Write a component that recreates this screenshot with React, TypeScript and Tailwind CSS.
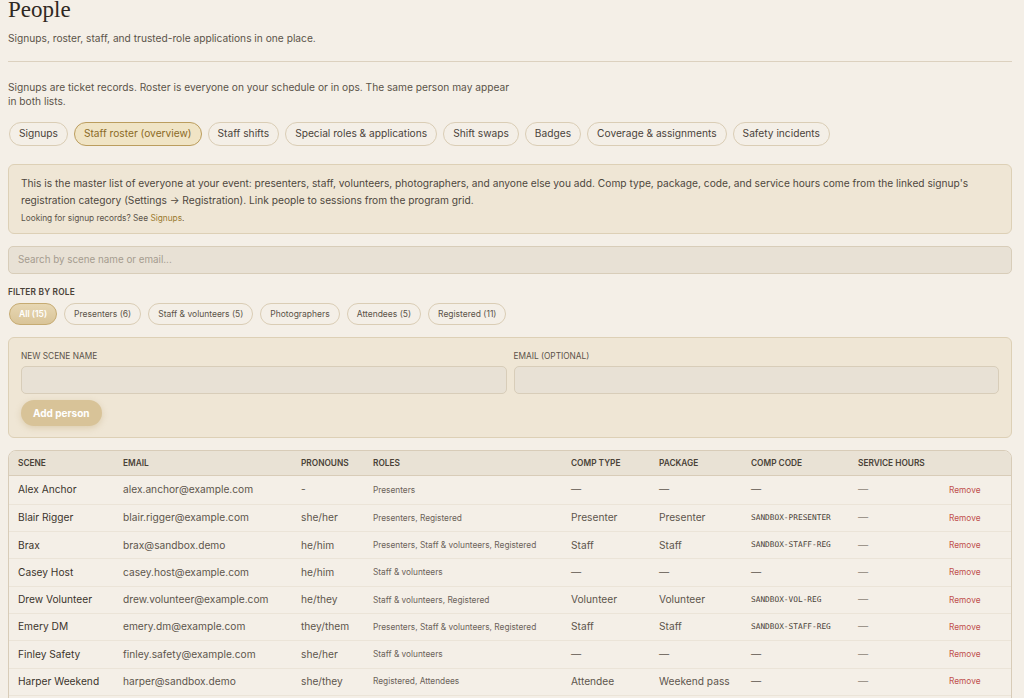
const tabs = [
  "Signups",
  "Staff roster (overview)",
  "Staff shifts",
  "Special roles & applications",
  "Shift swaps",
  "Badges",
  "Coverage & assignments",
  "Safety incidents",
];

const roleFilters = [
  "All (15)",
  "Presenters (6)",
  "Staff & volunteers (5)",
  "Photographers",
  "Attendees (5)",
  "Registered (11)",
];

const people = [
  { scene: "Alex Anchor", email: "alex.anchor@example.com", pronouns: "-", roles: "Presenters", comp: "—", pkg: "—", code: "—", hours: "—" },
  { scene: "Blair Rigger", email: "blair.rigger@example.com", pronouns: "she/her", roles: "Presenters, Registered", comp: "Presenter", pkg: "Presenter", code: "SANDBOX-PRESENTER", hours: "—" },
  { scene: "Brax", email: "brax@sandbox.demo", pronouns: "he/him", roles: "Presenters, Staff & volunteers, Registered", comp: "Staff", pkg: "Staff", code: "SANDBOX-STAFF-REG", hours: "—" },
  { scene: "Casey Host", email: "casey.host@example.com", pronouns: "he/him", roles: "Staff & volunteers", comp: "—", pkg: "—", code: "—", hours: "—" },
  { scene: "Drew Volunteer", email: "drew.volunteer@example.com", pronouns: "he/they", roles: "Staff & volunteers, Registered", comp: "Volunteer", pkg: "Volunteer", code: "SANDBOX-VOL-REG", hours: "—" },
  { scene: "Emery DM", email: "emery.dm@example.com", pronouns: "they/them", roles: "Presenters, Staff & volunteers, Registered", comp: "Staff", pkg: "Staff", code: "SANDBOX-STAFF-REG", hours: "—" },
  { scene: "Finley Safety", email: "finley.safety@example.com", pronouns: "she/her", roles: "Staff & volunteers", comp: "—", pkg: "—", code: "—", hours: "—" },
  { scene: "Harper Weekend", email: "harper@sandbox.demo", pronouns: "she/they", roles: "Registered, Attendees", comp: "Attendee", pkg: "Weekend pass", code: "—", hours: "—" },
  { scene: "Jordan Photo", email: "jordan.photo@example.com", pronouns: "he/him", roles: "Photographers", comp: "—", pkg: "—", code: "—", hours: "—" },
];

const cols = "grid grid-cols-[105px_178px_72px_198px_88px_92px_107px_91px_1fr]";

export default function App() {
  return (
    <div className="min-h-screen overflow-hidden bg-[#f4efe7] pl-2 pr-3 font-['Inter','Liberation_Sans',sans-serif] text-[#3b342c]">
      {/* Header */}
      <h1 className="-mt-[2px] font-['Liberation_Serif',serif] text-[23px] leading-none text-[#2f2923]">People</h1>
      <p className="mt-[10px] text-[10.2px] leading-[14px] text-[#5b5349]">
        Signups, roster, staff, and trusted-role applications in one place.
      </p>
      <div className="mt-[16px] border-t border-[#dcd1bf]" />

      <p className="mt-[18px] max-w-[505px] text-[10.2px] leading-[14px] text-[#5b5349]">
        Signups are ticket records. Roster is everyone on your schedule or in ops. The same person may appear in both lists.
      </p>

      {/* Tabs */}
      <div className="mt-[14px] flex gap-[6px] pl-px">
        {tabs.map((t) => (
          <div
            key={t}
            className={
              t === "Staff roster (overview)"
                ? "flex h-[24px] items-center rounded-full border border-[#bb9d5e] bg-[#f0e4c5] px-[9px] text-[10.2px] text-[#8b6a25]"
                : "flex h-[24px] items-center rounded-full border border-[#dacdb5] px-[9px] text-[10.2px] text-[#4a423a]"
            }
          >
            {t}
          </div>
        ))}
      </div>

      {/* Info box */}
      <div className="mt-[18px] rounded-[6px] border border-[#ddd0b6] bg-[#efe6d5] px-[12px] pt-[10px] pb-[9px]">
        <p className="text-[10.2px] leading-[17px] text-[#4e463d]">
          This is the master list of everyone at your event: presenters, staff, volunteers, photographers, and anyone else you add. Comp type, package, code, and service hours come from the linked signup's registration category (Settings → Registration). Link people to sessions from the program grid.
        </p>
        <p className="mt-[3px] text-[8.3px] leading-[12px] text-[#5b5349]">
          Looking for signup records? See <span className="text-[#9a7a2e]">Signups</span>.
        </p>
      </div>

      {/* Search */}
      <div className="mt-[12px] flex h-[28px] items-center rounded-[5px] border border-[#d8cdb9] bg-[#e8e1d5] px-[9px] text-[9.8px] text-[#a59c8f]">
        Search by scene name or email...
      </div>

      {/* Filter */}
      <div className="mt-[12px] text-[8.3px] font-semibold uppercase tracking-[0.2px] text-[#4a4238]">Filter by role</div>
      <div className="mt-[5px] flex gap-[7px] pl-px">
        {roleFilters.map((f, i) => (
          <div
            key={f}
            className={
              i === 0
                ? "flex h-[22px] items-center rounded-full border border-[#c6ab72] bg-gradient-to-b from-[#e7d7b3] to-[#d9c498] px-[9px] text-[8.5px] font-semibold text-white"
                : "flex h-[22px] items-center rounded-full border border-[#dacdb5] px-[9px] text-[8.5px] text-[#5b5349]"
            }
          >
            {f}
          </div>
        ))}
      </div>

      {/* Add form */}
      <div className="mt-[12px] rounded-[6px] border border-[#ddd0b6] bg-[#efe6d5] px-[12px] pt-[12px] pb-[11px]">
        <div className="flex gap-[7px]">
          <div className="flex-1">
            <div className="text-[8.3px] uppercase leading-[12px] text-[#5b5349]">New scene name</div>
            <div className="mt-[4px] h-[28px] rounded-[5px] border border-[#d8cdb9] bg-[#e8e1d5]" />
          </div>
          <div className="flex-1">
            <div className="text-[8.3px] uppercase leading-[12px] text-[#5b5349]">Email (optional)</div>
            <div className="mt-[4px] h-[28px] rounded-[5px] border border-[#d8cdb9] bg-[#e8e1d5]" />
          </div>
        </div>
        <button className="mt-[6px] h-[26px] rounded-full bg-[#d8c398] px-[12px] text-[10px] font-bold text-white shadow-[0_2px_6px_rgba(180,150,90,0.3)]">
          Add person
        </button>
      </div>

      {/* Table */}
      <div className="mt-[12px] overflow-hidden rounded-t-[8px] border border-[#d8ccb8]">
        <div className={`${cols} h-[25px] items-center border-b border-[#d8ccb8] bg-[#e9e2d5] text-[8.3px] font-semibold uppercase text-[#4a4238]`}>
          <div className="pl-[9px]">Scene</div>
          <div className="pl-[9px]">Email</div>
          <div className="pl-[9px]">Pronouns</div>
          <div className="pl-[9px]">Roles</div>
          <div className="pl-[9px]">Comp type</div>
          <div className="pl-[9px]">Package</div>
          <div className="pl-[9px]">Comp code</div>
          <div className="pl-[9px]">Service hours</div>
          <div />
        </div>
        {people.map((p, i) => (
          <div
            key={p.scene}
            className={`${cols} h-[27.3px] items-center ${i > 0 ? "border-t border-[#ebe4d8]" : ""} text-[10.2px]`}
          >
            <div className="pl-[9px] text-[#3b342c]">{p.scene}</div>
            <div className="pl-[9px] text-[#5d554c]">{p.email}</div>
            <div className="pl-[9px] text-[#5d554c]">{p.pronouns}</div>
            <div className="pl-[9px] text-[8.3px] text-[#6b6259]">{p.roles}</div>
            <div className="pl-[9px] text-[#5d554c]">{p.comp}</div>
            <div className="pl-[9px] text-[#5d554c]">{p.pkg}</div>
            {p.code === "—" ? (
              <div className="pl-[9px] text-[#5d554c]">—</div>
            ) : (
              <div className="pl-[9px] font-['DejaVu_Sans_Mono',monospace] text-[7.8px] text-[#4a4238]">{p.code}</div>
            )}
            <div className="pl-[9px] text-[#8a8176]">{p.hours}</div>
            <div className="pl-[9px] text-[8.3px] text-[#c0504d]">Remove</div>
          </div>
        ))}
      </div>
    </div>
  );
}
